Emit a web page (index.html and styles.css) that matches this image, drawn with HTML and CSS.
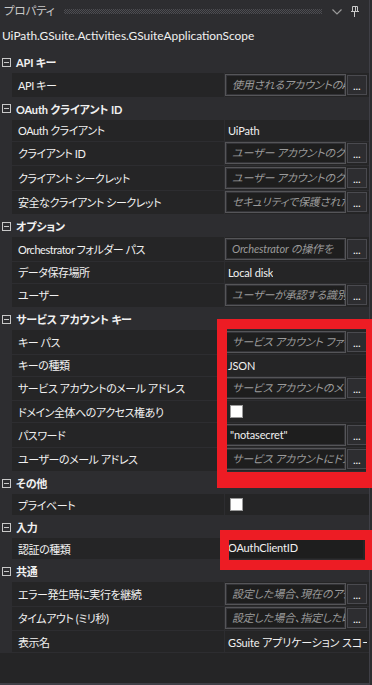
FILE: index.html
```html
<!DOCTYPE html>
<html lang="ja">
<head>
<meta charset="utf-8">
<link rel="stylesheet" href="styles.css">
</head>
<body>
<div class="panel">
  <div class="titlebar">
    <span class="title">プロパティ</span>
    <span class="dots"></span>
    <svg class="chev" width="10" height="6" viewBox="0 0 10 6"><path d="M0.5 0.5 L5 5 L9.5 0.5" fill="none" stroke="#9a9a9a" stroke-width="1.2"/></svg>
    <svg class="pin" width="8" height="11" viewBox="0 0 8 11"><path d="M1.5 0.5 H6.5 V5.5 H1.5 Z" fill="none" stroke="#c8c8c8"/><path d="M4.5 0.5 V5.5" stroke="#c8c8c8"/><path d="M0 5.5 H8" stroke="#c8c8c8"/><path d="M3.5 6 V11" stroke="#c8c8c8"/></svg>
  </div>
  <div class="header">UiPath.GSuite.Activities.GSuiteApplicationScope</div>
  <div class="grid">
    <div class="cat"><span class="exp"></span>API キー</div>
    <div class="row tall"><div class="name">API キー</div><div class="val"><div class="tb">使用されるアカウントのAPI キー</div><div class="btn">...</div></div></div>

    <div class="cat"><span class="exp"></span>OAuth クライアント ID</div>
    <div class="row"><div class="name">OAuth クライアント</div><div class="val"><span class="txt">UiPath</span></div></div>
    <div class="row tall"><div class="name">クライアント ID</div><div class="val"><div class="tb">ユーザー アカウントのクライアント ID</div><div class="btn">...</div></div></div>
    <div class="row tall"><div class="name">クライアント シークレット</div><div class="val"><div class="tb">ユーザー アカウントのクライアント シークレット</div><div class="btn">...</div></div></div>
    <div class="row tall"><div class="name">安全なクライアント シークレット</div><div class="val"><div class="tb">セキュリティで保護されたクライアント</div><div class="btn">...</div></div></div>

    <div class="cat"><span class="exp"></span>オプション</div>
    <div class="row tall"><div class="name">Orchestrator フォルダー パス</div><div class="val"><div class="tb">Orchestrator の操作を</div><div class="btn">...</div></div></div>
    <div class="row"><div class="name">データ保存場所</div><div class="val"><span class="txt">Local disk</span></div></div>
    <div class="row tall"><div class="name">ユーザー</div><div class="val"><div class="tb">ユーザーが承認する識別子</div><div class="btn">...</div></div></div>

    <div class="cat"><span class="exp"></span>サービス アカウント キー</div>
    <div class="row tall"><div class="name">キー パス</div><div class="val"><div class="tb">サービス アカウント ファイル</div><div class="btn">...</div></div></div>
    <div class="row"><div class="name">キーの種類</div><div class="val"><span class="txt">JSON</span></div></div>
    <div class="row tall"><div class="name">サービス アカウントのメール アドレス</div><div class="val"><div class="tb">サービス アカウントのメール</div><div class="btn">...</div></div></div>
    <div class="row"><div class="name">ドメイン全体へのアクセス権あり</div><div class="val"><span class="chk"></span></div></div>
    <div class="row tall"><div class="name">パスワード</div><div class="val"><div class="tb filled">"notasecret"</div><div class="btn">...</div></div></div>
    <div class="row tall"><div class="name">ユーザーのメール アドレス</div><div class="val"><div class="tb">サービス アカウントにドメイン</div><div class="btn">...</div></div></div>

    <div class="cat"><span class="exp"></span>その他</div>
    <div class="row"><div class="name">プライベート</div><div class="val"><span class="chk"></span></div></div>

    <div class="cat"><span class="exp"></span>入力</div>
    <div class="row"><div class="name">認証の種類</div><div class="val"><div class="combo">OAuthClientID</div></div></div>

    <div class="cat"><span class="exp"></span>共通</div>
    <div class="row tall"><div class="name">エラー発生時に実行を継続</div><div class="val"><div class="tb">設定した場合、現在のアクティビティ</div><div class="btn">...</div></div></div>
    <div class="row tall"><div class="name">タイムアウト (ミリ秒)</div><div class="val"><div class="tb">設定した場合、指定した時間</div><div class="btn">...</div></div></div>
    <div class="row"><div class="name">表示名</div><div class="val"><span class="txt">GSuite アプリケーション スコープ</span></div></div>
  </div>
  <div class="mark mark1"></div>
  <div class="mark mark2"></div>
</div>
</body>
</html>
```

FILE: styles.css
```css
* { box-sizing: border-box; }
html, body {
  margin: 0;
  padding: 0;
  background: #2d2d30;
  width: 372px;
  height: 685px;
  overflow: hidden;
}
body {
  font-family: "Lato", "Noto Sans CJK JP", sans-serif;
  font-feature-settings: "palt" 1;
  font-size: 11px;
  letter-spacing: -0.15px;
  color: #f1f1f1;
}
.panel {
  position: relative;
  width: 370px;
  height: 685px;
  background: #252526;
  border-right: 1px solid #3f3f46;
  border-bottom: 2px solid #3f3f46;
  display: flex;
  flex-direction: column;
}
.titlebar {
  height: 22px;
  background: #2d2d30;
  display: flex;
  align-items: center;
  padding: 0 0 0 4px;
}
.title {
  color: #c8c8c8;
  font-size: 11.5px;
  line-height: 22px;
}
.dots {
  flex: 1;
  height: 5px;
  margin: 1px 10px 0 9px;
  background: repeating-conic-gradient(#4d4d52 0 25%, transparent 0 50%) 0 0 / 2px 2px;
}
.chev { margin-right: 9px; margin-top: 2px; }
.pin { margin-right: 10px; }
.header {
  height: 29px;
  background: #2d2d30;
  padding-left: 2px;
  line-height: 28px;
  font-size: 11.9px;
  letter-spacing: 0;
  color: #f1f1f1;
}
.grid {
  display: flex;
  flex-direction: column;
}
.cat {
  height: 22px;
  background: #2d2d30;
  display: flex;
  align-items: center;
  font-weight: bold;
  color: #f1f1f1;
  padding-left: 2px;
}
.exp {
  width: 9px;
  height: 9px;
  border: 1px solid #c8c8c8;
  margin-right: 5px;
  position: relative;
  flex: none;
}
.exp::after {
  content: "";
  position: absolute;
  left: 1px;
  right: 1px;
  top: 3px;
  height: 1px;
  background: #c8c8c8;
}
.row {
  height: 22px;
  display: flex;
  border-left: 12px solid #2d2d30;
  border-bottom: 1px solid #2d2d30;
  background: #252526;
}
.row.tall { height: 24.5px; }
.name {
  width: 213px;
  flex: none;
  border-right: 1px solid #2d2d30;
  padding-left: 6px;
  display: flex;
  align-items: center;
  white-space: nowrap;
  overflow: hidden;
  letter-spacing: -0.45px;
}
.val {
  flex: 1;
  min-width: 0;
  display: flex;
  align-items: center;
  padding: 1px 2px 1px 0;
  gap: 1px;
}
.txt {
  padding-left: 3px;
  white-space: nowrap;
  overflow: hidden;
}
.tb {
  width: 121px;
  height: 22px;
  flex: none;
  border: 1px solid #555558;
  box-shadow: inset 0 0 0 1px #333337;
  background: #1e1e1e;
  color: #9a9a9a;
  font-style: italic;
  padding-left: 6px;
  line-height: 19px;
  white-space: nowrap;
  overflow: hidden;
}
.tb.filled {
  font-style: normal;
  color: #f1f1f1;
  padding-left: 4px;
}
.btn {
  width: 20px;
  height: 20px;
  flex: none;
  border: 1px solid #4a4a4f;
  background: #2d2d30;
  color: #ffffff;
  font-weight: bold;
  font-size: 9px;
  text-align: center;
  line-height: 20px;
  letter-spacing: 0.3px;
  padding-top: 1px;
}
.chk {
  width: 13px;
  height: 13px;
  margin-left: 5px;
  background: #ffffff;
  border: 1px solid #9a9a9a;
}
.combo {
  width: 135px;
  height: 19px;
  margin-left: 3px;
  background: #1e1e1e;
  line-height: 18px;
  padding-left: 0;
}
.mark {
  position: absolute;
  border-style: solid;
  border-color: #ed1c24;
}
.mark1 {
  left: 217px;
  top: 319px;
  width: 155px;
  height: 169px;
  border-width: 10px 6px 16px 10px;
}
.mark2 {
  left: 220px;
  top: 530px;
  width: 152px;
  height: 40px;
  border-width: 10px 7px 10px 9px;
}
```
